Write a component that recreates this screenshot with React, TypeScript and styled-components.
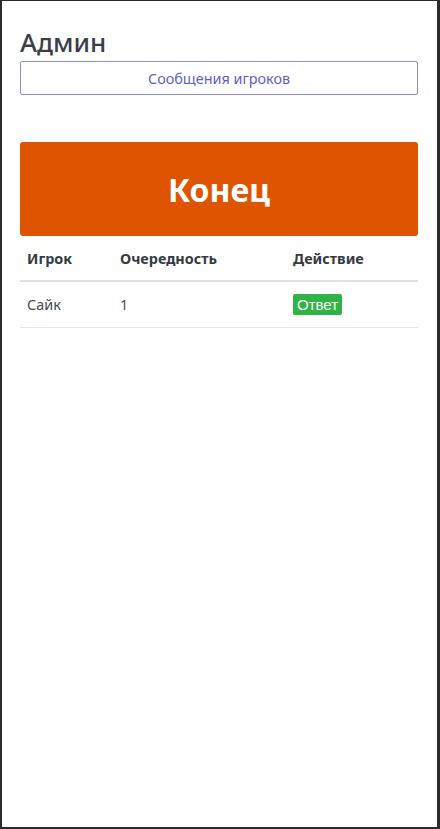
import React from "react";
import styled, { createGlobalStyle } from "styled-components";

const Global = createGlobalStyle`
  html, body { margin: 0; padding: 0; background: #2b2b2b; }
  body { font-family: "Noto Sans", "Open Sans", sans-serif; }
  * { box-sizing: border-box; }
`;

const Frame = styled.div`
  width: 440px;
  height: 829px;
  border-style: solid;
  border-color: #2b2b2b;
  border-width: 1px 3px 2px 2px;
  background: #ffffff;
  padding: 27px 19px 0 18px;
  display: flex;
  flex-direction: column;
`;

const Title = styled.h1`
  margin: 0;
  font-size: 26px;
  line-height: 28px;
  font-weight: 500;
  color: #3a3f4b;
`;

const OutlineButton = styled.button`
  margin-top: 5px;
  height: 34px;
  width: 100%;
  background: #fff;
  border: 1px solid #8d8ddf;
  border-radius: 2px;
  color: #5f5fc9;
  font-family: inherit;
  font-size: 14.4px;
  cursor: pointer;
`;

const Banner = styled.div`
  margin-top: 47px;
  height: 94px;
  background: #df5400;
  border-radius: 3px;
  display: flex;
  align-items: center;
  justify-content: center;
  color: #fff;
  font-size: 32px;
  font-weight: 700;
`;

const Table = styled.table`
  width: 100%;
  border-collapse: collapse;
  color: #343a40;
  font-size: 14.4px;
`;

const Th = styled.th<{ $w: number }>`
  width: ${(p) => p.$w}px;
  text-align: left;
  font-weight: 700;
  padding: 12px 7px 10px;
  line-height: 22px;
  border-bottom: 2px solid #dee2e6;
`;

const Td = styled.td`
  padding: 12px 7px 11px;
  line-height: 22px;
  border-bottom: 1px solid #e6e8eb;
  color: #454b55;
`;

const Badge = styled.span`
  display: inline-block;
  background: #2fb344;
  color: #fff;
  font-family: "Liberation Sans", Arial, sans-serif;
  font-size: 15px;
  line-height: 21px;
  padding: 0 4px;
  border-radius: 2px;
`;

export default function App() {
  return (
    <>
      <Global />
      <Frame>
        <Title>Админ</Title>
        <OutlineButton>Сообщения игроков</OutlineButton>
        <Banner>Конец</Banner>
        <Table>
          <thead>
            <tr>
              <Th $w={93}>Игрок</Th>
              <Th $w={173}>Очередность</Th>
              <Th $w={132}>Действие</Th>
            </tr>
          </thead>
          <tbody>
            <tr>
              <Td>Сайк</Td>
              <Td>1</Td>
              <Td>
                <Badge>Ответ</Badge>
              </Td>
            </tr>
          </tbody>
        </Table>
      </Frame>
    </>
  );
}
